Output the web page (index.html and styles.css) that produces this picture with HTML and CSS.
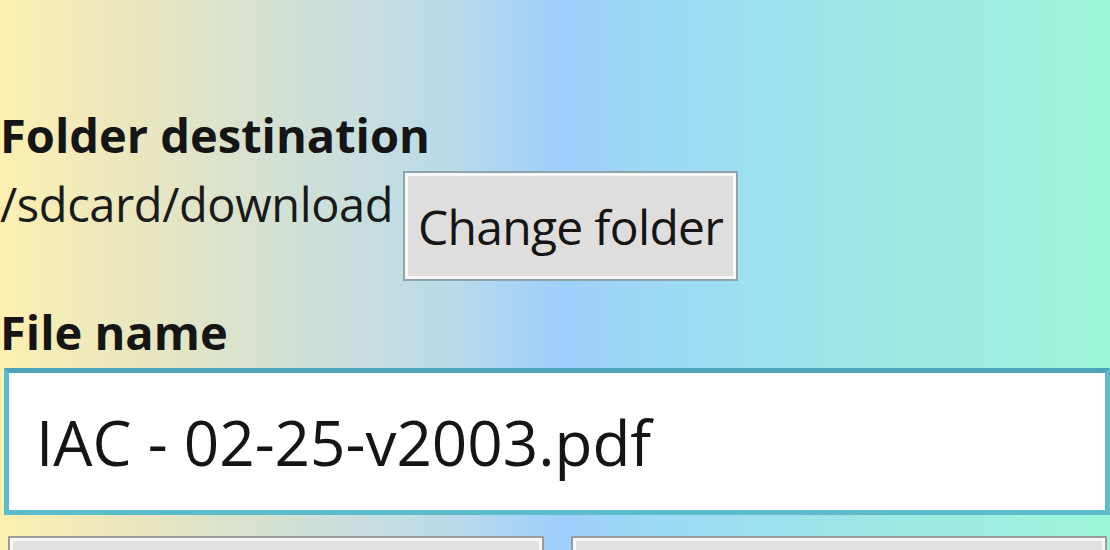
FILE: index.html
```html
<!DOCTYPE html>
<html lang="en">
<head>
<meta charset="utf-8">
<title>Save file</title>
<link rel="stylesheet" href="styles.css">
</head>
<body>
<main class="screen">
  <h2 class="label label-first">Folder destination</h2>
  <div class="dest-row">
    <span class="path">/sdcard/download</span>
    <button class="btn btn-change" type="button">Change folder</button>
  </div>
  <h2 class="label label-file">File name</h2>
  <div class="field">IAC - 02-25-v2003.pdf</div>
  <div class="actions">
    <button class="btn btn-wide" type="button"></button>
    <button class="btn btn-wide" type="button"></button>
  </div>
</main>
</body>
</html>
```

FILE: styles.css
```css
html, body {
  margin: 0;
  padding: 0;
  height: 100%;
  overflow: hidden;
}

body {
  background: linear-gradient(to right,
    #fcf0b0 0%,
    #e8e6c0 13%,
    #d0e0d6 27%,
    #b8daec 42%,
    #a4d2f8 48%,
    #9dcffc 51%,
    #9dd8f6 58%,
    #9ddff0 66%,
    #9de7e6 78%,
    #9cf5d8 100%);
  font-family: "Open Sans", "DejaVu Sans", sans-serif;
  color: #111;
}

.screen {
  display: flex;
  flex-direction: column;
}

.label {
  margin: 0;
  font-size: 47px;
  line-height: 46px;
  font-weight: 700;
  color: #151515;
}

.label-first {
  margin-top: 112px;
}

.label-file {
  margin-top: 28px;
}

.dest-row {
  display: flex;
  align-items: flex-start;
  gap: 10px;
  margin-top: 13px;
}

.path {
  font-size: 47px;
  line-height: 46px;
  color: #1a1a1a;
  margin-top: 10px;
  letter-spacing: -0.4px;
}

.btn {
  font-family: "Open Sans", "DejaVu Sans", sans-serif;
  background: #dfdedc;
  border: 2px solid #8ea4ac;
  box-shadow: inset 0 0 0 3px #f8f8f8;
  color: #151515;
  padding: 0;
  margin: 0;
}

.btn-change {
  width: 335px;
  height: 110px;
  font-size: 48px;
  letter-spacing: -0.7px;
}

.field {
  margin: 13px 0 0 4px;
  height: 137px;
  border: 5px solid #5cbccc;
  border-top-color: #4aa3b6;
  background: #ffffff;
  display: flex;
  align-items: center;
  padding-left: 27px;
  font-size: 62px;
  color: #151515;
}

.actions {
  display: flex;
  gap: 27px;
  margin: 21px 3px 0 8px;
}

.btn-wide {
  flex: 1;
  height: 80px;
  border-color: #9a9c9a;
  background: #e2e1df;
}
```
